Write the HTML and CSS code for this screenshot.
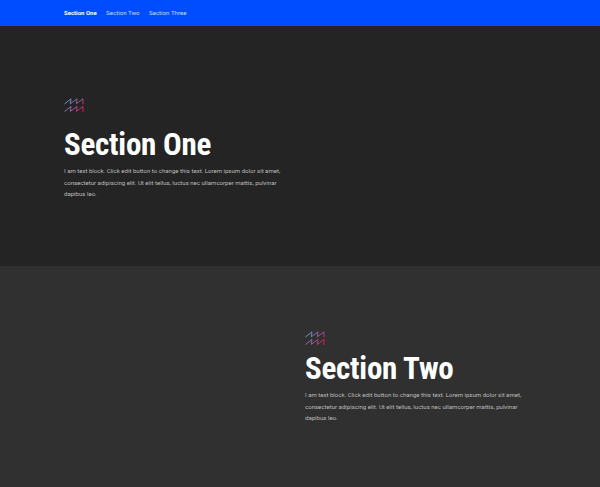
FILE: index.html
```html
<!DOCTYPE html>
<html lang="en">
<head>
<meta charset="utf-8">
<title>Sections</title>
<link rel="stylesheet" href="styles.css">
</head>
<body>
<nav class="nav">
  <a class="nav-link active">Section One</a>
  <a class="nav-link">Section Two</a>
  <a class="nav-link">Section Three</a>
</nav>
<main>
  <section class="panel panel-one">
    <div class="content">
      <svg class="icon" viewBox="0 0 20 14">
        <defs>
          <linearGradient id="wave" gradientUnits="userSpaceOnUse" x1="1" y1="1" x2="18" y2="14">
            <stop offset="0" stop-color="#58a8cc"/>
            <stop offset=".5" stop-color="#91619e"/>
            <stop offset="1" stop-color="#e01555"/>
          </linearGradient>
        </defs>
        <path d="M.5 6 7 .8 6.3 5.8 13 .8 12.4 5.8 19 .8V6.3M.5 13.6 7 8.4 6.3 13.4 13 8.4 12.4 13.4 19 8.4V13.9" fill="none" stroke="url(#wave)" stroke-linejoin="round"/>
      </svg>
      <h1 class="title">Section One</h1>
      <p class="text">I am text block. Click edit button to change this text. Lorem ipsum dolor sit amet, consectetur adipiscing elit. Ut elit tellus, luctus nec ullamcorper mattis, pulvinar dapibus leo.</p>
    </div>
  </section>
  <section class="panel panel-two">
    <div class="content">
      <svg class="icon" viewBox="0 0 20 14">
        <path d="M.5 6 7 .8 6.3 5.8 13 .8 12.4 5.8 19 .8V6.3M.5 13.6 7 8.4 6.3 13.4 13 8.4 12.4 13.4 19 8.4V13.9" fill="none" stroke="url(#wave)" stroke-linejoin="round"/>
      </svg>
      <h2 class="title">Section Two</h2>
      <p class="text">I am text block. Click edit button to change this text. Lorem ipsum dolor sit amet, consectetur adipiscing elit. Ut elit tellus, luctus nec ullamcorper mattis, pulvinar dapibus leo.</p>
    </div>
  </section>
</main>
</body>
</html>
```
FILE: styles.css
```css
* { box-sizing: border-box; }
body {
  margin: 0;
  height: 487px;
  overflow: hidden;
  background: #303030;
  font-family: Roboto, sans-serif;
}
.nav {
  display: flex;
  align-items: center;
  gap: 9.4px;
  height: 26px;
  padding-left: 64px;
  background: #004dff;
}
.nav-link {
  font-size: 6.15px;
  line-height: 10px;
  color: #c8d9ff;
}
.active { color: #fff; font-weight: 700; font-size: 6px; }
.panel { display: flex; }
.panel-one {
  height: 240px;
  padding: 72px 0 0 64px;
  background: #242424;
}
.panel-two {
  height: 221px;
  padding: 65px 0 0 305px;
  background: #303030;
}
.content { width: 222px; }
.icon { display: block; width: 20px; height: 14px; }
.title {
  margin: 15px 0 0;
  font-family: "Roboto Condensed", Roboto, sans-serif;
  font-stretch: 75%;
  font-size: 31px;
  font-weight: 700;
  line-height: 36px;
  letter-spacing: -.25px;
  white-space: nowrap;
  color: #fff;
}
.panel-two .title { margin-top: 6px; }
.text {
  margin: 2px 0 0;
  font-size: 6.07px;
  line-height: 11.5px;
  color: #bcbcbc;
}
```
